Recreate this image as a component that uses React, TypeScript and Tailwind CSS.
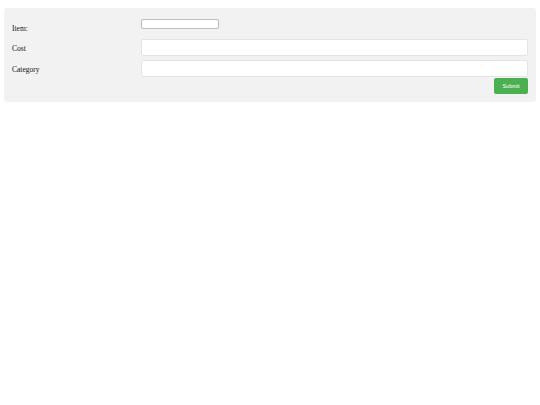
export default function App() {
  return (
    <div className="min-h-[405px] bg-white pt-[8px] px-[4px] font-['Liberation_Serif',serif]">
      <form className="rounded-[3px] bg-[#f2f2f2] pt-[11px] pb-[8px] px-[8px]" onSubmit={(e) => e.preventDefault()}>
        <div className="flex h-[20px]">
          <label className="w-[129px] pt-[5px] text-[7.5px] leading-[9px] text-[#111]">Item:</label>
          <input type="text" className="w-[78px] h-[10px] border border-[#bdbdbd] rounded-[2px] bg-white" />
        </div>
        <div className="flex items-center mb-[4px]">
          <label className="w-[129px] pt-[2px] text-[7.5px] leading-[9px] text-[#111]">Cost</label>
          <input type="text" className="flex-1 h-[17px] border border-[#e4e4e4] rounded-[2px] bg-white" />
        </div>
        <div className="flex items-center">
          <label className="w-[129px] pt-[2px] text-[7.5px] leading-[9px] text-[#111]">Category</label>
          <input type="text" className="flex-1 h-[17px] border border-[#e4e4e4] rounded-[2px] bg-white" />
        </div>
        <div className="flex justify-end mt-[1px]">
          <button
            type="submit"
            className="w-[34px] h-[16px] rounded-[2px] bg-[#4caf50] text-white text-[5.5px] font-['Liberation_Sans',sans-serif]"
          >
            Submit
          </button>
        </div>
      </form>
    </div>
  )
}
